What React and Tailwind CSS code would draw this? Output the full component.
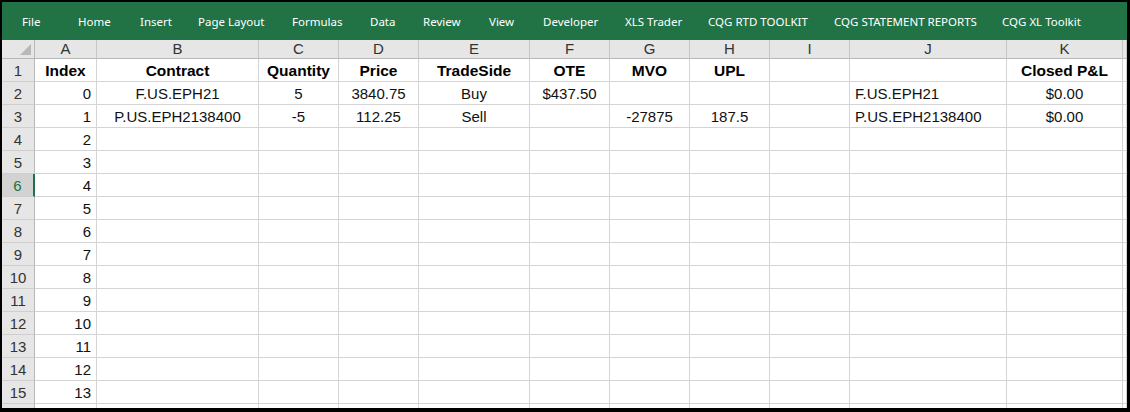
import React from "react";

const tabs = [
  { label: "File", w: "w-[56px]" },
  { label: "Home", w: "w-[62px]" },
  { label: "Insert", w: "w-[58px]" },
  { label: "Page Layout", w: "w-[94px]" },
  { label: "Formulas", w: "w-[78px]" },
  { label: "Data", w: "w-[53px]" },
  { label: "Review", w: "w-[66px]" },
  { label: "View", w: "w-[54px]" },
  { label: "Developer", w: "w-[82px]" },
  { label: "XLS Trader", w: "w-[83px]" },
  { label: "CQG RTD TOOLKIT", w: "w-[126px]" },
  { label: "CQG STATEMENT REPORTS", w: "w-[168px]" },
  { label: "CQG XL Toolkit", w: "w-[110px]" },
];

const letters = ["A", "B", "C", "D", "E", "F", "G", "H", "I", "J", "K", ""];

// alignment per column A..K (+ filler)
const align = [
  "justify-end pr-[5px]",
  "justify-center",
  "justify-center",
  "justify-center",
  "justify-center",
  "justify-center",
  "justify-center",
  "justify-center",
  "justify-center",
  "justify-start pl-[5px]",
  "justify-center",
  "justify-center",
];

const header = ["Index", "Contract", "Quantity", "Price", "TradeSide", "OTE", "MVO", "UPL", "", "", "Closed P&L", ""];

const data = [
  ["0", "F.US.EPH21", "5", "3840.75", "Buy", "$437.50", "", "", "", "F.US.EPH21", "$0.00", ""],
  ["1", "P.US.EPH2138400", "-5", "112.25", "Sell", "", "-27875", "187.5", "", "P.US.EPH2138400", "$0.00", ""],
];
for (let i = 2; i <= 13; i++) data.push([String(i), "", "", "", "", "", "", "", "", "", "", ""]);

function RowHead({ n }) {
  const active = n === 6;
  return (
    <div
      className={`h-[23px] pt-[2px] flex items-center justify-center border-b border-[#cfcfcf] text-[15px] ${
        active
          ? "bg-[#d2d2d2] text-[#217346] border-r-2 border-r-[#217346]"
          : "bg-[#e6e6e6] text-[#333] border-r border-r-[#b8b8b8]"
      }`}
    >
      {n}
    </div>
  );
}

export default function App() {
  return (
    <div className="w-[1130px] h-[412px] bg-black pt-[2px] pl-[2px] pr-[3px] pb-[4px] flex flex-col font-['Liberation_Sans',Arial,sans-serif]">
      {/* Ribbon tabs */}
      <div className="h-[38px] pt-[1px] bg-[#217346] flex items-center pl-[20px] text-white text-[11.5px] font-['Noto_Sans',sans-serif] shrink-0">
        {tabs.map((t) => (
          <span key={t.label} className={`${t.w} shrink-0 whitespace-nowrap`}>
            {t.label}
          </span>
        ))}
      </div>

      {/* Sheet */}
      <div className="flex-1 bg-white overflow-hidden grid grid-cols-[33px_62px_162px_80px_80px_111px_80px_80px_80px_80px_157px_116px_1fr] auto-rows-min">
        {/* column headers */}
        <div className="h-[19px] bg-[#e6e6e6] border-r border-b border-[#b8b8b8] relative">
          <div className="absolute right-[3px] bottom-[3px] w-0 h-0 border-l-[11px] border-l-transparent border-b-[11px] border-b-[#b8b8b8]" />
        </div>
        {letters.map((l, i) => (
          <div
            key={"h" + i}
            className="h-[19px] pt-[1px] bg-[#e6e6e6] border-r border-[#c6c6c6] border-b border-b-[#b8b8b8] flex items-center justify-center text-[15px] text-[#333]"
          >
            {l}
          </div>
        ))}

        {/* row 1 */}
        <RowHead n={1} />
        {header.map((h, i) => (
          <div
            key={"r1" + i}
            className={`h-[23px] pt-[2px] border-r border-b border-[#d4d4d4] flex items-center text-[15.5px] font-bold text-black ${
              i === 0 ? "justify-center" : align[i]
            }`}
          >
            {h}
          </div>
        ))}

        {data.map((row, r) => (
          <React.Fragment key={"r" + r}>
            <RowHead n={r + 2} />
            {row.map((v, i) => (
              <div
                key={i}
                className={`h-[23px] pt-[2px] border-r border-b border-[#d4d4d4] flex items-center text-[15px] text-[#111] whitespace-nowrap ${align[i]}`}
              >
                {v}
              </div>
            ))}
          </React.Fragment>
        ))}

        {/* partial row 16 */}
        <div className="h-[4px] bg-[#e6e6e6] border-r border-[#b8b8b8]" />
        {letters.map((l, i) => (
          <div key={"p" + i} className="h-[4px] border-r border-[#d4d4d4]" />
        ))}
      </div>
    </div>
  );
}
